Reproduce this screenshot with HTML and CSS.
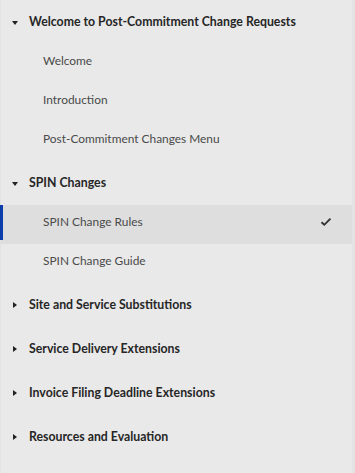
FILE: index.html
```html
<!DOCTYPE html>
<html>
<head>
<meta charset="utf-8">
<link rel="stylesheet" href="styles.css">
</head>
<body>
<nav class="menu">
  <div class="section open">
    <div class="head"><span class="caret down"></span><span>Welcome to Post-Commitment Change Requests</span></div>
    <div class="item">Welcome</div>
    <div class="item">Introduction</div>
    <div class="item">Post-Commitment Changes Menu</div>
  </div>
  <div class="section open">
    <div class="head"><span class="caret down"></span><span>SPIN Changes</span></div>
    <div class="item active">SPIN Change Rules
      <svg class="check" width="12" height="10" viewBox="0 0 12 10"><path d="M1.5 5.2 L4.3 7.8 L10.5 1.6" fill="none" stroke="#333" stroke-width="1.9"/></svg>
    </div>
    <div class="item">SPIN Change Guide</div>
  </div>
  <div class="section">
    <div class="head"><span class="caret right"></span><span>Site and Service Substitutions</span></div>
  </div>
  <div class="section">
    <div class="head"><span class="caret right"></span><span>Service Delivery Extensions</span></div>
  </div>
  <div class="section">
    <div class="head"><span class="caret right"></span><span>Invoice Filing Deadline Extensions</span></div>
  </div>
  <div class="section">
    <div class="head"><span class="caret right"></span><span>Resources and Evaluation</span></div>
  </div>
</nav>
</body>
</html>
```
FILE: styles.css
```css
html, body {
  margin: 0;
  padding: 0;
  background: #e9e9e9;
}
body {
  width: 355px;
  height: 473px;
  overflow: hidden;
  font-family: "Lato", "Liberation Sans", sans-serif;
}
.menu {
  display: flex;
  flex-direction: column;
  height: 473px;
  border-left: 1px solid #e2e2e2;
  border-right: 3px solid #e4e4e4;
  box-sizing: border-box;
}
.head {
  height: 44px;
  box-sizing: border-box;
  padding-bottom: 1px;
  display: flex;
  align-items: center;
  font-weight: 700;
  font-size: 12.3px;
  color: #262626;
  padding-left: 11px;
}
.caret {
  width: 0;
  height: 0;
}
.caret.down {
  border-left: 3px solid transparent;
  border-right: 3px solid transparent;
  border-top: 4px solid #222;
  margin-right: 11px;
  margin-top: 2px;
}
.caret.right {
  border-top: 3px solid transparent;
  border-bottom: 3px solid transparent;
  border-left: 4px solid #222;
  margin-left: 1px;
  margin-right: 12px;
}
.item {
  height: 39px;
  box-sizing: border-box;
  padding-bottom: 6px;
  display: flex;
  align-items: center;
  padding-left: 42px;
  padding-right: 20px;
  font-size: 11.9px;
  color: #4a4a4a;
  position: relative;
}
.item.active {
  background: #dedede;
}
.item.active::before {
  content: "";
  position: absolute;
  left: -1px;
  top: 0;
  bottom: 4px;
  width: 3px;
  background: #0b3ea8;
}
.check {
  margin-left: auto;
}
```
